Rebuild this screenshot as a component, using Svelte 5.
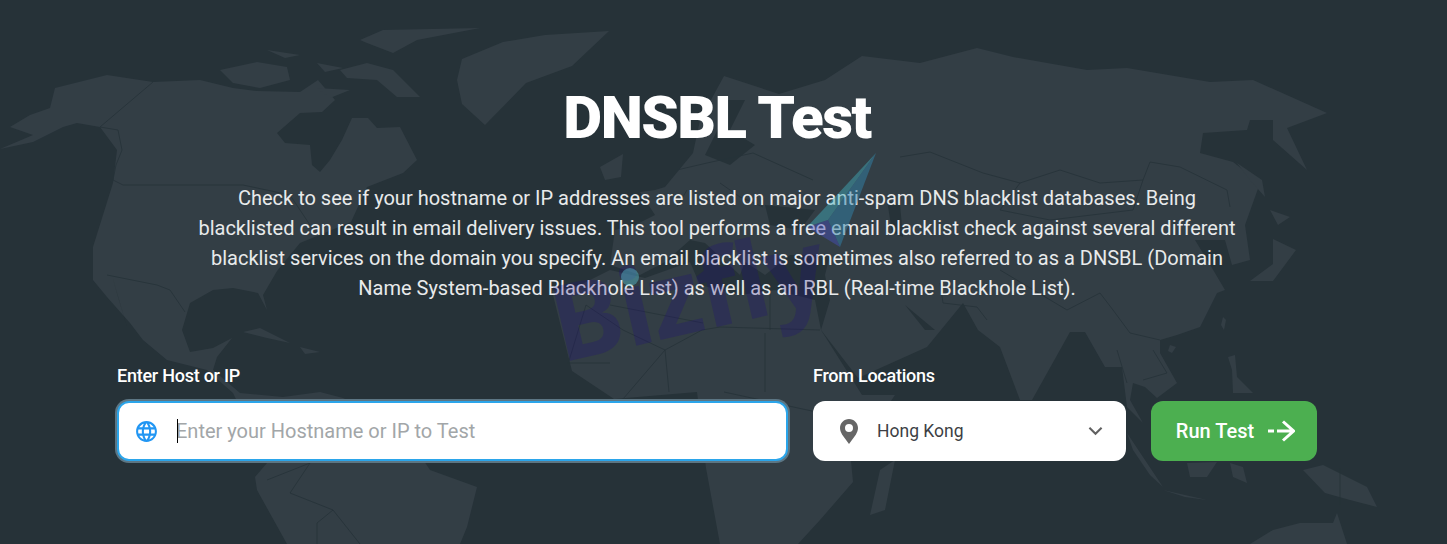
<script>
  const land = [
    "M0 149L33 135L10 127L30 115L50 108L55 88L107 75L153 82L200 80L233 88L257 91L300 92L318 80L335 100L322 112L300 113L277 133L285 143L310 145L312 165L320 172L330 160L342 140L352 118L368 118L377 128L400 127L417 160L403 173L367 187L351 222L300 243L277 271L263 295L267 310L258 293L233 288L213 290L190 303L182 330L190 352L213 348L232 338L217 357L213 370L240 393L283 397L320 392L343 398L400 425L430 470L477 487L467 527L460 544L287 544L257 490L255 477L267 463L233 393L207 370L167 360L143 340L130 323L107 297L93 280L93 247L113 183L117 150L100 127L77 123L63 127L33 142Z",
    "M220 70L257 62L287 67L290 80L260 88L233 83Z",
    "M340 70L367 63L393 70L420 97L397 97L377 80L347 78Z",
    "M360 40L383 30L480 28L417 40L393 53L367 43Z",
    "M267 50L300 55L285 58Z", "M317 63L343 68L325 72Z", "M317 88L350 90L330 98Z",
    "M457 80L462 59L503 42L545 35L609 31L572 66L526 83L485 125L462 104Z",
    "M243 332L260 328L290 343L267 338Z", "M300 347L320 352L305 354Z",
    "M600 167L623 154L621 177L605 180Z",
    "M552 291L580 285L610 270L645 278L690 262L700 285L740 295L775 290L815 300L821 330L862 395L895 395L876 423L850 450L853 482L820 520L798 544L720 544L706 468L697 392L614 399L572 371Z",
    "M665 187L693 153L700 120L724 76L779 94L825 80L862 56L920 63L977 48L1013 57L1087 70L1127 68L1210 82L1253 80L1327 113L1287 128L1307 170L1273 140L1273 120L1250 120L1247 130L1203 133L1200 153L1233 162L1260 183L1245 225L1250 260L1232 265L1225 240L1195 240L1212 268L1225 290L1217 293L1200 327L1177 335L1160 340L1160 353L1177 383L1157 398L1145 387L1133 383L1130 400L1143 423L1127 407L1122 367L1105 367L1085 332L1070 332L1032 400L1020 400L1000 347L978 330L963 303L927 347L858 378L821 330L830 300L825 275L830 255L790 255L765 275L745 262L740 275L705 243L690 240L665 262L640 275L610 265L615 230L635 225L655 215L640 192L655 190Z",
    "M880 470L895 460L885 510L870 515Z",
    "M1127 433L1163 487L1150 475L1133 450Z", "M1187 463L1217 462L1207 477L1190 477Z",
    "M1163 490L1207 500L1185 497Z", "M1228 357L1235 355L1237 377L1253 393L1233 393L1232 370Z",
    "M1230 463L1243 467L1247 483L1233 477Z", "M1303 470L1323 465L1367 487L1377 507L1350 500L1325 493Z",
    "M1250 544L1273 530L1300 523L1333 523L1337 513L1347 544Z",
    "M1273 239L1296 250L1273 281L1250 281L1273 264Z", "M1270 210L1290 217L1278 225Z",
    "M1237 163L1262 180L1265 197L1250 180Z", "M1223 317L1226 320L1224 330L1221 325Z", "M1170 345L1176 347L1172 353L1168 351Z"
  ];
  const seas = [
    "M113 279L127 327L118 297Z",
    "M720 100L745 100L730 130L755 145L730 165L705 155L720 125Z",
    "M765 205L815 210L800 230L770 225Z",
    "M887 200L900 205L903 237L892 232Z",
    "M905 305L935 330L925 330Z"
  ];
  const borders = [
    "M100 127L153 82", "M100 127L118 130L122 150L116 165L113 180L123 185H243L290 195L310 225",
    "M107 275L157 285L170 290L185 312", "M267 480L310 463L290 493L333 510L360 544", "M317 544V523L333 510",
    "M568 364L586 305L623 330L665 350L702 330L720 327L820 330", "M610 305L703 323", "M770 290V330", "M567 363H610",
    "M623 399L665 350L669 392", "M765 333V392", "M724 392L835 416",
    "M677 170L707 163L753 153L813 180", "M720 183L740 197L763 207", "M687 190L677 207",
    "M900 157L930 152L983 173L1020 183L1060 170L1100 183L1143 180L1150 162L1180 167L1227 190L1230 207",
    "M1020 183L1000 210L1050 220L1133 210L1143 180",
    "M940 283L943 303L977 307L987 320", "M1000 270L1067 310L1100 293L1113 310L1130 333L1160 340",
    "M1117 350L1127 383", "M1153 350L1167 373L1143 380", "M1340 468V505"
  ];
</script>

<main class="page">
  <svg class="map" viewBox="0 0 1447 544" aria-hidden="true">
    {#each land as d}<path class="land" {d} />{/each}
    {#each seas as d}<path class="sea" {d} />{/each}
    {#each borders as d}<path class="line" {d} />{/each}
  </svg>

  <div class="container">
    <h1>DNSBL Test</h1>
    <p class="intro">Check to see if your hostname or IP addresses are listed on major anti-spam DNS blacklist databases. Being blacklisted can result in email delivery issues. This tool performs a free email blacklist check against several different blacklist services on the domain you specify. An email blacklist is sometimes also referred to as a DNSBL (Domain Name System-based Blackhole List) as well as an RBL (Real-time Blackhole List).</p>

    <form class="form" onsubmit={(e) => e.preventDefault()}>
      <div class="field host">
        <label for="host">Enter Host or IP</label>
        <div class="box focused">
          <svg class="globe" viewBox="0 0 24 24"><path d="M11.99 2C6.47 2 2 6.48 2 12s4.47 10 9.99 10C17.52 22 22 17.52 22 12S17.52 2 11.99 2zm6.93 6h-2.95c-.32-1.25-.78-2.45-1.38-3.56 1.84.63 3.37 1.91 4.33 3.56zM12 4.04c.83 1.2 1.48 2.53 1.91 3.96h-3.82c.43-1.43 1.08-2.76 1.91-3.96zM4.26 14C4.1 13.36 4 12.69 4 12s.1-1.36.26-2h3.38c-.08.66-.14 1.32-.14 2 0 .68.06 1.34.14 2H4.26zm.82 2h2.95c.32 1.25.78 2.45 1.38 3.56-1.84-.63-3.37-1.9-4.33-3.56zm2.95-8H5.08c.96-1.66 2.49-2.93 4.33-3.56C8.81 5.55 8.35 6.75 8.03 8zM12 19.96c-.83-1.2-1.48-2.53-1.91-3.96h3.82c-.43 1.43-1.08 2.76-1.91 3.96zM14.34 14H9.66c-.09-.66-.16-1.32-.16-2 0-.68.07-1.35.16-2h4.68c.09.65.16 1.32.16 2 0 .68-.07 1.34-.16 2zm.25 5.56c.6-1.11 1.06-2.31 1.38-3.56h2.95c-.96 1.65-2.49 2.93-4.33 3.56zM16.36 14c.08-.66.14-1.32.14-2 0-.68-.06-1.34-.14-2h3.38c.16.64.26 1.31.26 2s-.1 1.36-.26 2h-3.38z" /></svg>
          <span class="caret"></span>
          <input id="host" type="text" placeholder="Enter your Hostname or IP to Test" />
        </div>
      </div>

      <div class="field location">
        <span class="label">From Locations</span>
        <div class="box select">
          <svg class="pin" viewBox="0 0 18 25"><path fill-rule="evenodd" d="M9 0C4 0 0 4 0 9c0 2.500 1 4.500 2.200 6.800L9 25l6.800-9.200C17 13.500 18 11.500 18 9c0-5-4-9-9-9zm0 5a4 4 0 1 1 0 8 4 4 0 0 1 0-8z" /></svg>
          <span class="value">Hong Kong</span>
          <svg class="chev" viewBox="0 0 16 10"><path d="M1.500 1.500L8 8l6.500-6.500" /></svg>
        </div>
      </div>

      <button type="submit">
        <span>Run Test</span>
        <svg class="arrow" viewBox="0 0 27 22"><path d="M0 11h6M9 11h16M15 1.500L25.500 11 15 20.500" /></svg>
      </button>
    </form>
  </div>

  <div class="mark" aria-hidden="true">
    <svg class="plane" viewBox="0 0 80 100"><path class="p1" d="M73 1L4 75L25 68Z" /><path class="p2" d="M73 1L25 68L37 95Z" /><path class="p3" d="M4 75L25 68L37 95Z" /></svg>
    <span class="brand">Bizfly</span>
    <span class="dot"></span>
  </div>
</main>

<style>
  :global(body) { margin: 0; background: #263238; }
  .page {
    position: relative;
    height: 544px;
    overflow: hidden;
    background: #263238;
    font-family: Roboto, "Liberation Sans", sans-serif;
  }
  .map { position: absolute; inset: 0; width: 100%; height: 100%; }
  .land { fill: #333e45; }
  .sea { fill: #263238; }
  .line { fill: none; stroke: #263238; stroke-width: 1; opacity: .8; }
  .container {
    position: relative;
    width: 1200px;
    margin-left: 117px;
    padding-top: 83px;
    box-sizing: border-box;
  }
  h1 {
    margin: 0;
    text-align: center;
    color: #fff;
    font-size: 60px;
    line-height: 70px;
    font-weight: 900;
    letter-spacing: -1.5px;
  }
  .intro {
    margin: 30px auto 0;
    width: 1042px;
    text-align: center;
    color: #e8eaeb;
    font-size: 20px;
    line-height: 30px;
  }
  .form {
    display: flex;
    align-items: flex-end;
    gap: 25px;
    margin-top: 61px;
  }
  .field { display: flex; flex-direction: column; gap: 13px; }
  .host { width: 671px; }
  .location { width: 313px; }
  label, .label {
    color: #fff;
    font-size: 18px;
    line-height: 24px;
    font-weight: 500;
    letter-spacing: -.25px;
  }
  .box {
    position: relative;
    display: flex;
    align-items: center;
    height: 60px;
    box-sizing: border-box;
    background: #fff;
    border-radius: 12px;
  }
  .focused {
    border: 2px solid #2ba5ea;
    box-shadow: 0 0 0 2px #5c7684;
    padding-left: 15px;
  }
  .globe { width: 25px; height: 25px; fill: #2196f3; flex: none; }
  .caret {
    position: absolute;
    left: 58px;
    top: 16px;
    width: 1px;
    height: 24px;
    background: #000;
  }
  input {
    flex: 1;
    min-width: 0;
    margin-left: 17px;
    border: 0;
    outline: 0;
    padding: 0;
    background: transparent;
    caret-color: transparent;
    font: 400 20px Roboto, sans-serif;
    color: #333;
  }
  input::placeholder { color: #a2a6a8; opacity: 1; }
  .select { padding: 0 23px 0 27px; color: #3d3f45; font-size: 17.500px; }
  .pin { width: 18px; height: 25px; fill: #666; flex: none; }
  .value { flex: 1; margin-left: 19px; }
  .chev { width: 15px; height: 10px; fill: none; stroke: #616161; stroke-width: 2.200; flex: none; }
  button {
    display: flex;
    align-items: center;
    justify-content: center;
    gap: 14px;
    width: 166px;
    height: 60px;
    border: 0;
    padding: 0 0 0 3px;
    border-radius: 12px;
    background: #4caf50;
    color: #fff;
    font: 500 20px Roboto, sans-serif;
  }
  .arrow { width: 27px; height: 22px; fill: none; stroke: #fff; stroke-width: 3; flex: none; }
  .mark { position: absolute; inset: 0; pointer-events: none; }
  .plane { position: absolute; left: 803px; top: 152px; width: 80px; height: 100px; }
  .p1 { fill: rgba(64, 175, 190, .45); }
  .p2 { fill: rgba(50, 130, 170, .5); }
  .p3 { fill: rgba(70, 80, 190, .45); }
  .brand {
    position: absolute;
    left: 548px;
    top: 239px;
    color: rgba(30, 10, 130, .24);
    font: 700 106px/1 "Open Sans", Roboto, sans-serif;
    letter-spacing: -2px;
    transform: rotate(-13deg);
  }
  .dot {
    position: absolute;
    left: 621px;
    top: 268px;
    width: 18px;
    height: 18px;
    border-radius: 50%;
    background: rgba(90, 200, 215, .42);
  }
</style>
